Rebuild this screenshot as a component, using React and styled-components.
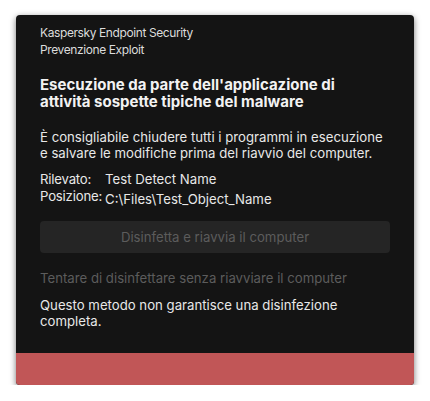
import React from "react"
import styled, { createGlobalStyle } from "styled-components"

const GlobalStyle = createGlobalStyle`
  body {
    margin: 0;
    background: #ffffff;
    font-family: Inter, "Noto Sans", sans-serif;
  }
`

const Card = styled.div`
  margin: 15px 0 0 16px;
  width: 398px;
  height: 370px;
  background: #141414;
  border-radius: 4px;
  box-shadow: 0 2px 6px rgba(0, 0, 0, 0.55);
  display: flex;
  flex-direction: column;
  overflow: hidden;
`

const Body = styled.div`
  flex: 1;
  padding: 9px 24px 0;
  display: flex;
  flex-direction: column;
`

const Header = styled.div`
  font-size: 12px;
  line-height: 17px;
  letter-spacing: -0.4px;
  color: #dcdcdc;
`

const Title = styled.h1`
  margin: 18px 0 0;
  max-width: 320px;
  font-size: 15px;
  line-height: 17px;
  font-weight: 700;
  color: #f2f2f2;
`

const Text = styled.p`
  margin: ${({ $top }) => $top || 0}px 0 0;
  font-size: 13.2px;
  line-height: 16px;
  color: ${({ $muted }) => ($muted ? "#5c5c5c" : "#e8e8e8")};
`

const Details = styled.div`
  margin-top: 10px;
  display: grid;
  grid-template-columns: auto 1fr;
  column-gap: 3px;
  font-size: 13.2px;
  line-height: 17px;
  color: #e8e8e8;
`

const Label = styled.span`
  letter-spacing: -0.2px;
`

const Value = styled.span`
  transform: translateY(${({ $shift }) => $shift || 0}px);
`

const Button = styled.button`
  margin-top: 16px;
  height: 32px;
  border: none;
  border-radius: 4px;
  background: #252525;
  color: #5c5c5c;
  font-family: inherit;
  font-size: 13.2px;
`

const Footer = styled.div`
  height: 32px;
  background: #c15657;
`

export default function App() {
  return (
    <>
      <GlobalStyle />
      <Card>
        <Body>
          <Header>
            Kaspersky Endpoint Security
            <br />
            Prevenzione Exploit
          </Header>
          <Title>
            Esecuzione da parte dell'applicazione di attività sospette tipiche del malware
          </Title>
          <Text $top={19}>
            È consigliabile chiudere tutti i programmi in esecuzione e salvare le modifiche
            prima del riavvio del computer.
          </Text>
          <Details>
            <Label>Rilevato:</Label>
            <Value>Test Detect Name</Value>
            <Label>Posizione:</Label>
            <Value $shift={3}>C:\Files\Test_Object_Name</Value>
          </Details>
          <Button>Disinfetta e riavvia il computer</Button>
          <Text $top={17} $muted>
            Tentare di disinfettare senza riavviare il computer
          </Text>
          <Text $top={11}>
            Questo metodo non garantisce una disinfezione completa.
          </Text>
        </Body>
        <Footer />
      </Card>
    </>
  )
}
